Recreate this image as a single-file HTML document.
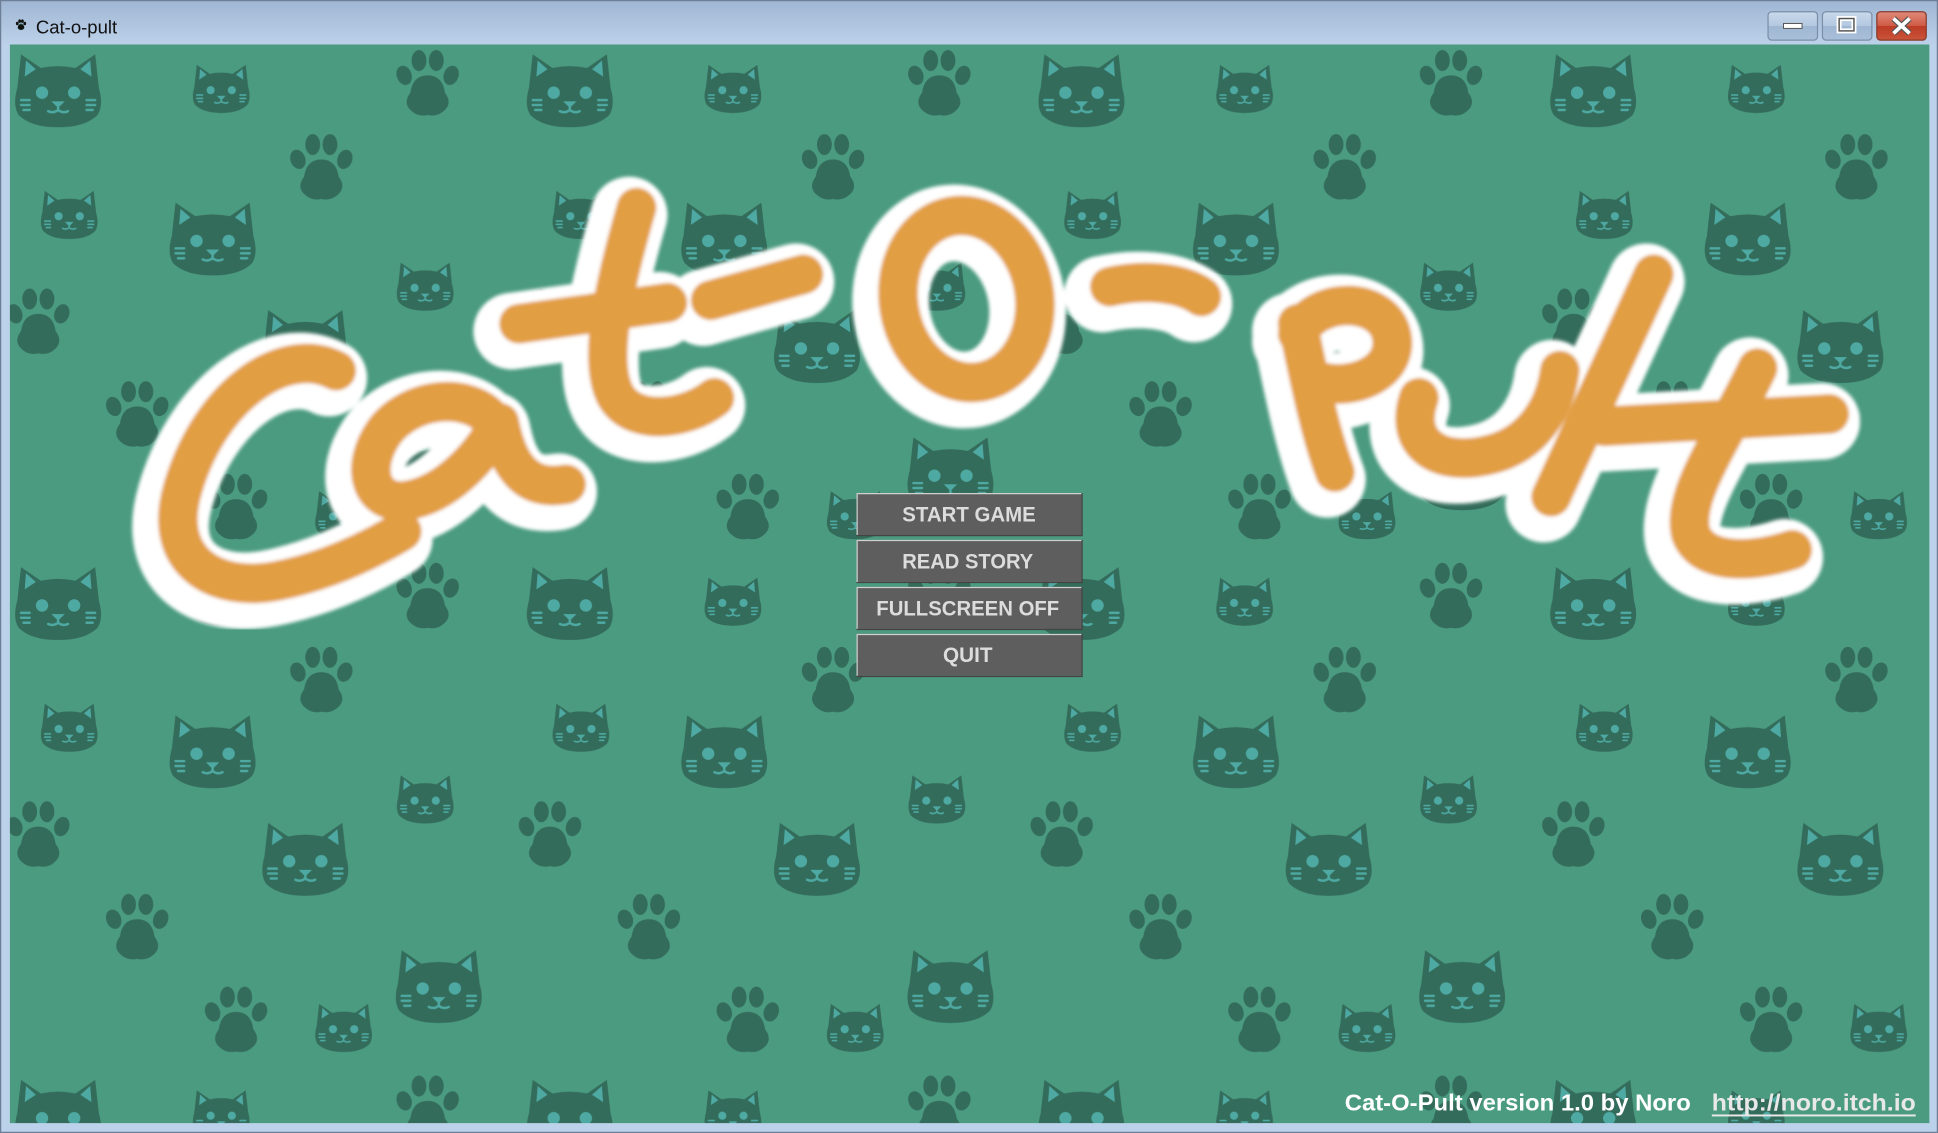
<!DOCTYPE html>
<html><head><meta charset="utf-8"><style>
html,body{margin:0;padding:0;width:1938px;height:1133px;overflow:hidden;background:#bcd2ea}
svg{display:block}
</style></head><body>
<svg width="1938" height="1133" viewBox="0 0 1568 917" preserveAspectRatio="none" xmlns="http://www.w3.org/2000/svg">
<defs>
<linearGradient id="tb" x1="0" y1="0" x2="0" y2="1"><stop offset="0" stop-color="#9fb6d3"/><stop offset="1" stop-color="#bcd1e9"/></linearGradient>
<linearGradient id="wb" x1="0" y1="0" x2="0" y2="1"><stop offset="0" stop-color="#c9d9ec"/><stop offset="0.5" stop-color="#b3c8e0"/><stop offset="0.5" stop-color="#9fb6d2"/><stop offset="1" stop-color="#a9c0db"/></linearGradient>
<linearGradient id="cb" x1="0" y1="0" x2="0" y2="1"><stop offset="0" stop-color="#e08a7a"/><stop offset="0.5" stop-color="#cf5a45"/><stop offset="0.5" stop-color="#bd3b25"/><stop offset="1" stop-color="#c9543a"/></linearGradient>
<g id="cat">
<path d="M-33,-4 L-30,-31 L-14,-20 Q0,-23 14,-20 L30,-31 L33,-4 Q37,10 32,18 Q22,28 0,28 Q-22,28 -32,18 Q-37,10 -33,-4Z" fill="#336c5a"/>
<path d="M-27,-13 L-26,-26 L-18,-19Z M27,-13 L26,-26 L18,-19Z" fill="#4ea9a3"/>
<circle cx="-13" cy="0" r="5" fill="#4ea9a3"/><circle cx="13" cy="0" r="5" fill="#4ea9a3"/>
<path d="M-3,8 L3,8 L0,11Z M0,11 L0,14 M-8,15 Q-4,17 0,14 Q4,17 8,15 M-30,6 L-23,6 M-30,10 L-23,10 M-28,14 L-23,14 M23,6 L30,6 M23,10 L30,10 M23,14 L28,14" stroke="#4ea9a3" stroke-width="2" stroke-linecap="round" fill="#4ea9a3"/>
</g>
<g id="paw" fill="#336c5a">
<ellipse cx="-19" cy="-6" rx="6" ry="8" transform="rotate(-20 -19 -6)"/>
<ellipse cx="-7" cy="-18" rx="6" ry="8.5"/>
<ellipse cx="7" cy="-18" rx="6" ry="8.5"/>
<ellipse cx="19" cy="-6" rx="6" ry="8" transform="rotate(20 19 -6)"/>
<path d="M0,-6 Q12,-6 14,8 Q20,16 14,22 Q8,28 0,26 Q-8,28 -14,22 Q-20,16 -14,8 Q-12,-6 0,-6Z"/>
</g>
<pattern id="bg" patternUnits="userSpaceOnUse" x="0" y="35" width="414" height="415">
<rect width="414" height="415" fill="#4b9b81"/>
<use href="#cat" x="47" y="40"/>
<use href="#cat" x="172" y="160"/>
<use href="#cat" x="247" y="247"/>
<use href="#cat" x="355" y="350"/>
<use href="#cat" transform="translate(179 38) scale(0.66)"/>
<use href="#cat" transform="translate(56 140) scale(0.66)"/>
<use href="#cat" transform="translate(344 198) scale(0.66)"/>
<use href="#cat" transform="translate(278 383) scale(0.66)"/>
<use href="#paw" x="346" y="32"/>
<use href="#paw" x="260" y="100"/>
<use href="#paw" x="31" y="225"/>
<use href="#paw" x="111" y="300"/>
<use href="#paw" x="191" y="375"/>
</pattern>
<filter id="bl" x="-10%" y="-10%" width="120%" height="120%"><feGaussianBlur stdDeviation="1.5"/></filter>
<g id="logo" fill="none" stroke-linecap="round" stroke-linejoin="round">
<path d="M272,300 C230,278 170,320 148,395 C130,455 175,480 225,470 C265,462 300,445 325,430"/>
<path d="M398,340 C380,318 335,320 312,348 C290,378 300,410 330,405 C360,400 388,372 404,342 C410,372 422,398 458,392"/>
<path d="M515,168 C500,220 482,290 498,320 C512,345 555,340 578,322"/>
<path d="M420,262 L540,245"/>
<path d="M575,243 L650,222"/>
<ellipse cx="782" cy="242" rx="55" ry="68" transform="rotate(-10 782 242)"/>
<path d="M898,232 C925,226 955,228 972,240"/>
<path d="M1050,262 C1060,310 1068,350 1080,382"/>
<path d="M1050,270 C1065,240 1115,240 1125,268 C1135,300 1095,318 1065,308"/>
<path d="M1148,322 C1135,360 1165,378 1205,368 C1240,360 1258,330 1262,300"/>
<path d="M1338,222 L1255,402"/>
<path d="M1422,298 C1395,355 1360,400 1368,432 C1378,458 1420,455 1450,445"/>
<path d="M1298,345 L1480,335"/>
</g>
</defs>
<!-- window -->
<rect x="0" y="0" width="1568" height="917" fill="#bcd2ea"/>
<rect x="0" y="0" width="1568" height="36" fill="url(#tb)"/>
<rect x="0.5" y="0.5" width="1567" height="916" fill="none" stroke="#6c7f97"/>
<g transform="translate(17 20) scale(0.16)" fill="#000"><use href="#paw" style="fill:#000"/></g>
<g transform="translate(17 20) scale(0.16)" fill="#111">
<ellipse cx="-19" cy="-6" rx="7" ry="9"/><ellipse cx="-7" cy="-18" rx="7" ry="9"/><ellipse cx="7" cy="-18" rx="7" ry="9"/><ellipse cx="19" cy="-6" rx="7" ry="9"/><ellipse cx="0" cy="12" rx="16" ry="14"/>
</g>
<text x="29" y="27" font-family="Liberation Sans, sans-serif" font-size="15" fill="#111">Cat-o-pult</text>
<rect x="1430.5" y="9.5" width="40" height="23" rx="3" fill="url(#wb)" stroke="#7c8fa8"/>
<rect x="1443" y="19" width="15" height="4" fill="#fff" stroke="#555" stroke-width="0.8"/>
<rect x="1474.5" y="9.5" width="40" height="23" rx="3" fill="url(#wb)" stroke="#7c8fa8"/>
<rect x="1488" y="15" width="12" height="10" fill="none" stroke="#fff" stroke-width="4"/>
<rect x="1488" y="15" width="12" height="10" fill="none" stroke="#555" stroke-width="1.2"/>
<rect x="1518.5" y="9.5" width="40" height="23" rx="3" fill="url(#cb)" stroke="#8a3a2c"/>
<path d="M1532,15 L1545,27 M1545,15 L1532,27" stroke="#555" stroke-width="5"/>
<path d="M1532,15 L1545,27 M1545,15 L1532,27" stroke="#fff" stroke-width="3"/>
<!-- content -->
<rect x="8" y="36" width="1553" height="873" fill="url(#bg)"/>
<!-- logo -->
<g filter="url(#bl)">
<use href="#logo" stroke="#ffffff" stroke-width="62" transform="translate(-6 6)"/>
<use href="#logo" stroke="#e29e43" stroke-width="32"/>
</g>
<!-- buttons -->
<g font-family="Liberation Sans, sans-serif" font-weight="bold" font-size="17" fill="#dcdcdc" text-anchor="middle">
<rect x="693" y="399" width="182" height="34" fill="#5e5e5e"/><path d="M693.5,433 V399.5 H875" stroke="#d0d0d0" fill="none"/><path d="M693,433.5 H875.5 V399" stroke="#444" fill="none"/>
<text x="784" y="422" textLength="108" lengthAdjust="spacingAndGlyphs">START GAME</text>
<rect x="693" y="437" width="182" height="34" fill="#5e5e5e"/><path d="M693.5,471 V437.5 H875" stroke="#d0d0d0" fill="none"/><path d="M693,471.5 H875.5 V437" stroke="#444" fill="none"/>
<text x="783" y="460" textLength="106" lengthAdjust="spacingAndGlyphs">READ STORY</text>
<rect x="693" y="475" width="182" height="34" fill="#5e5e5e"/><path d="M693.5,509 V475.5 H875" stroke="#d0d0d0" fill="none"/><path d="M693,509.5 H875.5 V475" stroke="#444" fill="none"/>
<text x="783" y="498" textLength="148" lengthAdjust="spacingAndGlyphs">FULLSCREEN OFF</text>
<rect x="693" y="513" width="182" height="34" fill="#5e5e5e"/><path d="M693.5,547 V513.5 H875" stroke="#d0d0d0" fill="none"/><path d="M693,547.5 H875.5 V513" stroke="#444" fill="none"/>
<text x="783" y="536" textLength="40" lengthAdjust="spacingAndGlyphs">QUIT</text>
</g>
<!-- footer -->
<g font-family="Liberation Sans, sans-serif" font-weight="bold" font-size="19">
<text x="1088" y="899" fill="#ffffff" textLength="280" lengthAdjust="spacingAndGlyphs">Cat-O-Pult   version 1.0 by Noro</text>
<text x="1385" y="899" fill="#e8e8e8" textLength="165" lengthAdjust="spacingAndGlyphs">http://noro.itch.io</text>
<rect x="1385" y="902" width="165" height="1.6" fill="#e8e8e8"/>
</g>
</svg>
</body></html>
